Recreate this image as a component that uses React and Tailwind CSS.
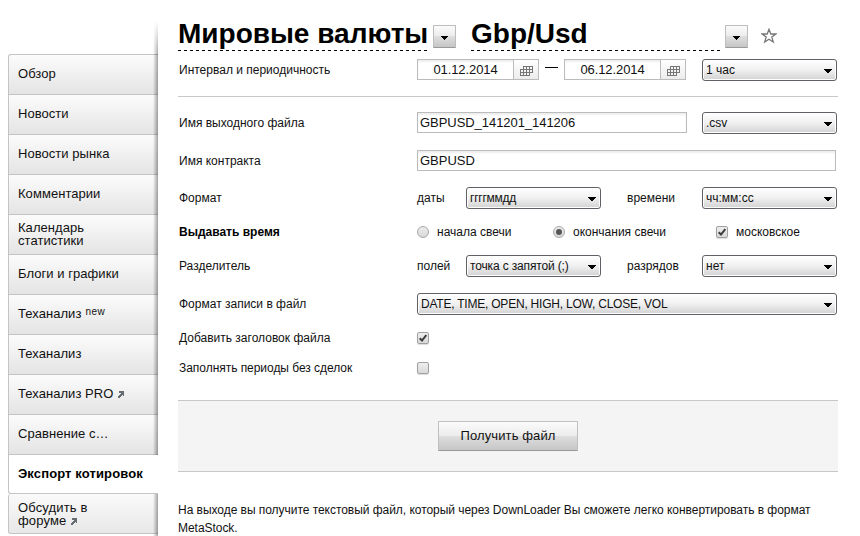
import React from "react";

const NAV = [
  { text: "Обзор" },
  { text: "Новости" },
  { text: "Новости рынка" },
  { text: "Комментарии" },
  { text: "Календарь", second: "статистики" },
  { text: "Блоги и графики" },
  { text: "Теханализ", sup: "new" },
  { text: "Теханализ" },
  { text: "Теханализ PRO", out: true },
  { text: "Сравнение с…" },
];

function OutArrow() {
  return (
    <svg width="6" height="7" viewBox="0 0 6 7" className="ml-[5px] inline-block" shapeRendering="crispEdges">
      <path d="M1 0h5v5H5V4H4v1H3v1H2v1H0V5h1V4h1V3h1V2H1z" fill="#666c70" />
    </svg>
  );
}

function NavItem({ item }) {
  return (
    <li className="flex h-10 flex-col justify-center border-t border-l border-[#c4c4c4] bg-linear-to-b from-[#fcfcfc] to-[#e4e4e4] pb-[2px] pl-[9px] text-[13px] leading-[13px] tracking-[0.05px] first:rounded-tl-[3px]">
      <div className="whitespace-nowrap">
        {item.text}
        {item.sup && <span className="relative -top-[3px] ml-1 text-[10px] tracking-[0.5px]">{item.sup}</span>}
        {item.out && <OutArrow />}
      </div>
      {item.second && <div>{item.second}</div>}
    </li>
  );
}

function Caret() {
  return (
    <svg width="8" height="5" viewBox="0 0 8 5" className="shrink-0" shapeRendering="crispEdges">
      <path d="M0 0h8v1H7v1H6v1H5v1H3V3H2V2H1V1H0z" fill="#000" />
    </svg>
  );
}

function Select({ children, className }) {
  return (
    <div className={"flex h-[22px] shrink-0 items-center justify-between rounded-[3px] border border-[#606066] bg-linear-to-b from-white via-[#f0f0f0] to-[#d2d2d2] pr-1 pl-[3px] text-[12px] leading-[14px] shadow-[inset_0_0_0_1px_#fff] " + className}>
      <span className="whitespace-nowrap">{children}</span>
      <span className="mt-[3px]"><Caret /></span>
    </div>
  );
}

function DropButton({ className }) {
  return (
    <div className={"flex h-[23px] w-[23px] shrink-0 items-center justify-center rounded-[1px] border border-[#bdbdbd] border-b-[#999] bg-[linear-gradient(#fbfbfb,#ececec_50%,#dedede_50%,#c6c6c6)] pt-[3px] " + className}>
      <svg width="7" height="4" viewBox="0 0 7 4" shapeRendering="crispEdges">
        <path d="M0 0h7v1H6v1H5v1H4v1H3V3H2V2H1V1H0z" fill="#000" />
      </svg>
    </div>
  );
}

function DateField({ children }) {
  return (
    <div className="flex h-[21px] w-[122px] shrink-0 border border-[#bcbcbc] shadow-[inset_0_2px_2px_#eee]">
      <div className="w-[95px] shrink-0 text-center text-[13px] leading-[19px] tracking-[-0.1px]">{children}</div>
      <div className="flex flex-1 items-center justify-center border-l border-[#bcbcbc] bg-linear-to-b from-white to-[#ececec] pt-[3px]">
        <svg width="13" height="10" viewBox="0 0 13 10" fill="none" stroke="#777" shapeRendering="crispEdges">
          <path d="M3.5 .5h9v6h-3v3h-9v-6h3zM3 3.5h10M0 6.5h10M6.5 0v10M9.5 0v7M3.5 3v7" />
        </svg>
      </div>
    </div>
  );
}

function Radio({ on }) {
  return (
    <span className="flex size-[12px] shrink-0 items-center justify-center rounded-full border border-[#a8a8a8] bg-linear-to-b from-[#ececec] to-[#d8d8d8]">
      {on && <span className="size-[6px] rounded-full bg-[#555]" />}
    </span>
  );
}

function Check({ on }) {
  return (
    <span className="flex size-[12px] shrink-0 items-center justify-center rounded-[2px] border border-[#a0a0a0] bg-linear-to-b from-[#eee] to-[#d9d9d9] shadow-[0_1px_1px_#ddd]">
      {on && (
        <svg width="8" height="8" viewBox="0 0 8 8" fill="none" className="shrink-0">
          <path d="M.7 4.2 3 6.5 7.3 1" stroke="#3c3c3c" strokeWidth="2" />
        </svg>
      )}
    </span>
  );
}

function Row({ label, className, children }) {
  return (
    <div className={"flex items-center whitespace-nowrap " + className}>
      <div className="w-[239px] shrink-0 pl-px">{label}</div>
      {children}
    </div>
  );
}

export default function App() {
  return (
    <div className="flex h-[536px] w-[860px] overflow-hidden bg-white font-['Liberation_Sans',Arial,sans-serif] text-[12px] leading-[14px] text-[#111]">
      <aside className="relative ml-2 w-[150px] shrink-0 pt-[54px]">
        <ul>
          {NAV.map((item, i) => <NavItem key={i} item={item} />)}
        </ul>
        <div className="flex h-10 items-center rounded-bl-[3px] border-y border-l border-[#c4c4c4] bg-white pb-[2px] pl-[9px] text-[13px] leading-[13px] font-bold tracking-[0.12px] whitespace-nowrap text-black">
          Экспорт котировок
        </div>
        <div className="relative flex h-10 flex-col justify-center rounded-l-[3px] border-b border-l border-[#c4c4c4] bg-linear-to-b from-[#fafafa] to-[#e8e8e8] pl-[9px] text-[13px] leading-[13px] tracking-[0.15px]">
          <div>Обсудить в</div>
          <div>форуме<OutArrow /></div>
          <div className="absolute top-0 right-0 h-[42px] w-[5px] bg-linear-to-r from-transparent to-black/35" />
        </div>
        <div className="absolute top-[21px] right-0 h-[434px] w-[5px] bg-linear-to-r from-transparent to-black/35 mask-t-from-[400px]" />
      </aside>

      <main className="ml-5 w-[660px] shrink-0 pt-[17px]">
        <header className="flex h-[34px] text-[28px] leading-[33px] font-bold whitespace-nowrap text-black">
          <div className="h-[34px] w-[251px] bg-[repeating-linear-gradient(90deg,#000_0_3px,transparent_3px_6px)] bg-[length:100%_1px] bg-bottom bg-no-repeat">Мировые валюты</div>
          <DropButton className="mt-2 ml-1" />
          <div className="ml-[15px] h-[34px] w-[250px] bg-[repeating-linear-gradient(90deg,#000_0_3px,transparent_3px_6px)] bg-[length:100%_1px] bg-bottom bg-no-repeat">Gbp/Usd</div>
          <DropButton className="mt-2 ml-1" />
          <svg width="16" height="16" viewBox="0 0 16 16" className="mt-[11px] ml-[13px]" fill="none" stroke="#777" strokeWidth="1.3">
            <path d="M8 1.3 9.8 6h5L10.8 9.1l1.5 5L8 11.300l-4.300 2.800 1.500-5L1.200 6h5z" />
          </svg>
        </header>

        <Row label="Интервал и периодичность" className="mt-2 h-[22px]">
          <div className="flex items-start self-start">
            <DateField>01.12.2014</DateField>
            <div className="mx-[6px] mt-[8px] h-px w-[13px] bg-black" />
            <DateField>06.12.2014</DateField>
          </div>
          <Select className="ml-4 w-[135px]">1 час</Select>
        </Row>

        <div className="mt-[15px] h-px bg-[#c8c8c8]" />

        <Row label="Имя выходного файла" className="mt-[15px] h-[22px]">
          <div className="h-[21px] w-[270px] self-start border border-[#bcbcbc] pl-[2px] text-[13px] leading-[19px] tracking-[-0.05px] shadow-[inset_0_2px_2px_#eee]">GBPUSD_141201_141206</div>
          <Select className="ml-[15px] w-[135px]">.csv</Select>
        </Row>
        <Row label="Имя контракта" className="mt-4 h-[21px]">
          <div className="h-[21px] w-[419px] border border-[#bcbcbc] pl-[2px] text-[13px] leading-[19px] shadow-[inset_0_2px_2px_#eee]">GBPUSD</div>
        </Row>
        <Row label="Формат" className="mt-4 h-[22px]">
          <div className="w-[49px] shrink-0">даты</div>
          <Select className="w-[135px] tracking-[-0.25px]">ггггммдд</Select>
          <div className="ml-[26px] w-[75px] shrink-0">времени</div>
          <Select className="w-[135px]">чч:мм:сс</Select>
        </Row>
        <Row label={<b className="text-black">Выдавать время</b>} className="mt-[15px] h-[16px]">
          <div className="flex w-[136px] shrink-0 items-center gap-2"><Radio />начала свечи</div>
          <div className="flex w-[163px] shrink-0 items-center gap-2"><Radio on />окончания свечи</div>
          <div className="flex items-center gap-2"><Check on />московское</div>
        </Row>
        <Row label="Разделитель" className="mt-[15px] h-[22px]">
          <div className="w-[49px] shrink-0">полей</div>
          <Select className="w-[135px] tracking-[-0.15px]">точка с запятой (;)</Select>
          <div className="ml-[26px] w-[75px] shrink-0">разрядов</div>
          <Select className="w-[135px]">нет</Select>
        </Row>
        <Row label="Формат записи в файл" className="mt-4 h-[22px]">
          <Select className="w-[420px] tracking-[-0.22px]">DATE, TIME, OPEN, HIGH, LOW, CLOSE, VOL</Select>
        </Row>
        <Row label="Добавить заголовок файла" className="mt-4 h-[14px]"><Check on /></Row>
        <Row label="Заполнять периоды без сделок" className="mt-[16px] h-[14px] tracking-[-0.04px]"><Check /></Row>

        <div className="mt-[25px] flex h-[72px] border-y border-[#c8c8c8] bg-[#f4f4f4] pt-5 pl-[260px]">
          <div className="h-[30px] w-[140px] rounded-[1px] border border-[#c0c0c0] border-b-[#999] bg-[linear-gradient(#fbfbfb,#ececec_50%,#dedede_50%,#c6c6c6)] text-center text-[13px] leading-[28px] tracking-[0.12px]">
            Получить файл
          </div>
        </div>

        <p className="mt-[29px] leading-[18px] tracking-[-0.04px] whitespace-nowrap">
          На выходе вы получите текстовый файл, который через DownLoader Вы сможете легко конвертировать в формат
          <br />
          MetaStock.
        </p>
      </main>
    </div>
  );
}
